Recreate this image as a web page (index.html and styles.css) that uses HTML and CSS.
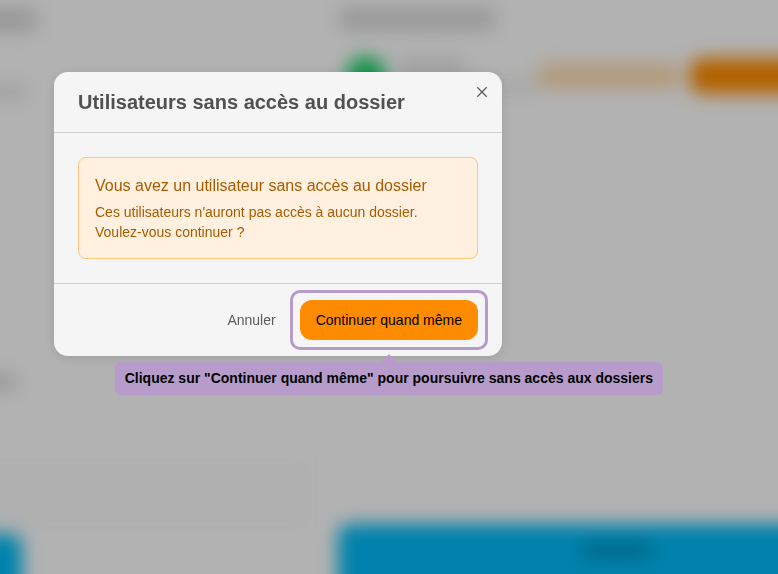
FILE: index.html
```html
<!DOCTYPE html>
<html lang="fr">
<head>
  <meta charset="UTF-8" />
  <meta name="viewport" content="width=device-width, initial-scale=1.0"/>
  <title>Utilisateurs sans accès au dossier</title>
  <link rel="stylesheet" href="styles.css">
</head>
<body>
  <div class="backdrop" aria-hidden="true">
    <div class="page">
      <div class="side">
        <div class="bar side-title"></div>
        <div class="bar side-text"></div>
        <div class="bar side-label"></div>
        <div class="side-panel"></div>
        <div class="side-action"></div>
      </div>
      <div class="main">
        <div class="bar main-title"></div>
        <div class="user">
          <div class="avatar"></div>
          <div class="user-info">
            <div class="bar user-name"></div>
            <div class="bar user-mail"></div>
          </div>
          <div class="user-link"></div>
          <div class="user-action"></div>
        </div>
        <div class="main-action"><div class="action-label"></div></div>
      </div>
    </div>
  </div>

  <div class="overlay">
    <div class="modal" role="dialog" aria-modal="true" aria-labelledby="modalTitle">
      <div class="modal-header">
        <h2 id="modalTitle">Utilisateurs sans accès au dossier</h2>
        <button type="button" class="close" aria-label="Fermer">
          <svg width="12" height="12" viewBox="0 0 12 12" fill="none" stroke="currentColor" stroke-width="1.3">
            <path d="M1.3 1.3 10.7 10.7M10.7 1.3 1.3 10.7"/>
          </svg>
        </button>
      </div>
      <div class="modal-body">
        <div class="alert" role="alert">
          <h3>Vous avez un utilisateur sans accès au dossier</h3>
          <p>Ces utilisateurs n'auront pas accès à aucun dossier. Voulez-vous continuer ?</p>
        </div>
      </div>
      <div class="modal-footer">
        <button type="button" class="btn">Annuler</button>
        <div class="step">
          <button type="button" class="btn btn-primary" aria-describedby="stepHint">Continuer quand même</button>
          <div class="hint" id="stepHint" role="tooltip">Cliquez sur "Continuer quand même" pour poursuivre sans accès aux dossiers</div>
        </div>
      </div>
    </div>
  </div>
</body>
</html>
```
FILE: styles.css
```css
* {
  box-sizing: border-box;
}
body {
  margin: 0;
  font-family: "Liberation Sans", Arial, sans-serif;
  font-size: 14px;
  line-height: 20px;
  color: #515151;
  background: #fff;
}
h2, h3, p {
  margin: 0;
}

/* page behind the dialog, bleeds past the window so the blur has no edge */
.backdrop {
  display: flex;
  height: 100vh;
  overflow: hidden;
}
.page {
  display: flex;
  flex: 1;
  margin: 0 -32px -32px;
  filter: blur(9px);
}
.bar {
  border-radius: 8px;
  background: #dadada;
}
.side {
  display: flex;
  flex-direction: column;
  flex: 0 0 346px;
  padding-top: 8px;
}
.side-title {
  width: 70px;
  height: 24px;
}
.side-text {
  width: 60px;
  height: 16px;
  margin-top: 52px;
  background: #e8e8e8;
}
.side-label {
  width: 50px;
  height: 16px;
  margin-top: 274px;
}
.side-panel {
  height: 64px;
  margin-top: 72px;
  background: #fcfcfc;
}
.side-action {
  flex: 1;
  width: 54px;
  margin-top: 8px;
  border-radius: 0 12px 0 0;
  background: #00baf6;
}
.main {
  display: flex;
  flex-direction: column;
  flex: 1;
  min-width: 0;
  padding: 8px 0 0 24px;
}
.main-title {
  width: 158px;
  height: 22px;
}
.user {
  display: flex;
  align-items: center;
  height: 40px;
  margin-top: 26px;
  padding-left: 8px;
}
.avatar {
  width: 40px;
  height: 40px;
  border-radius: 50%;
  background: #1ed36c;
}
.user-info {
  display: flex;
  flex-direction: column;
  gap: 8px;
  width: 138px;
  margin-left: 12px;
}
.user-name {
  width: 68px;
  height: 12px;
}
.user-mail {
  height: 12px;
  background: #ececec;
}
.user-link {
  width: 146px;
  height: 24px;
  border-radius: 12px;
  background: #ffdcae;
}
.user-action {
  flex: 1;
  height: 36px;
  margin-left: 8px;
  border-radius: 12px;
  background: #ff8c00;
}
.main-action {
  flex: 1;
  margin-top: 428px;
  padding-top: 18px;
  border-radius: 12px 0 0 0;
  background: #00baf6;
}
.action-label {
  width: 70px;
  height: 16px;
  margin-left: 244px;
  border-radius: 8px;
  background: #0094c2;
}

/* dialog */
.overlay {
  position: fixed;
  inset: 0;
  padding: 72px 54px;
  background: rgba(0, 0, 0, 0.3);
}
.modal {
  position: relative;
  max-width: 448px;
  border-radius: 14px;
  background: #f5f5f5;
  box-shadow: 0 2px 12px rgba(0, 0, 0, 0.12);
}
.modal-header {
  padding: 16px 24px;
  border-bottom: 1px solid #d0d0d0;
}
.modal-header h2 {
  font-size: 20px;
  line-height: 28px;
}
.close {
  position: absolute;
  top: 8px;
  right: 8px;
  display: flex;
  padding: 6px;
  border: 0;
  background: none;
  color: #5c5c5c;
  cursor: pointer;
}
.modal-body {
  padding: 24px;
}
.alert {
  padding: 16px;
  border: 1px solid #ffc67f;
  border-radius: 8px;
  background: #fff0df;
  color: #a85b00;
}
.alert h3 {
  margin-bottom: 4px;
  font-size: 16px;
  font-weight: normal;
  line-height: 24px;
}
.modal-footer {
  display: flex;
  justify-content: flex-end;
  gap: 8px;
  padding: 16px 24px;
  border-top: 1px solid #d0d0d0;
}
.btn {
  height: 40px;
  padding: 0 16px;
  border: 0;
  border-radius: 12px;
  background: none;
  color: #5c5c5c;
  font: inherit;
  cursor: pointer;
}
.btn-primary {
  background: #ff8c00;
  color: #000;
}

/* guided step around the button */
.step {
  position: relative;
}
.step::before {
  content: "";
  position: absolute;
  inset: -10px;
  border: 3px solid #b79ccb;
  border-radius: 10px;
  pointer-events: none;
}
.hint {
  position: absolute;
  top: 62px;
  left: 50%;
  transform: translateX(-50%);
  padding: 6px 10px 7px;
  border-radius: 6px;
  background: #b79ccb;
  color: #000;
  font-weight: bold;
  white-space: nowrap;
}
.hint::before {
  content: "";
  position: absolute;
  bottom: 100%;
  left: 50%;
  margin-left: -8px;
  border: 8px solid transparent;
  border-top: 0;
  border-bottom-color: #b79ccb;
}
```
